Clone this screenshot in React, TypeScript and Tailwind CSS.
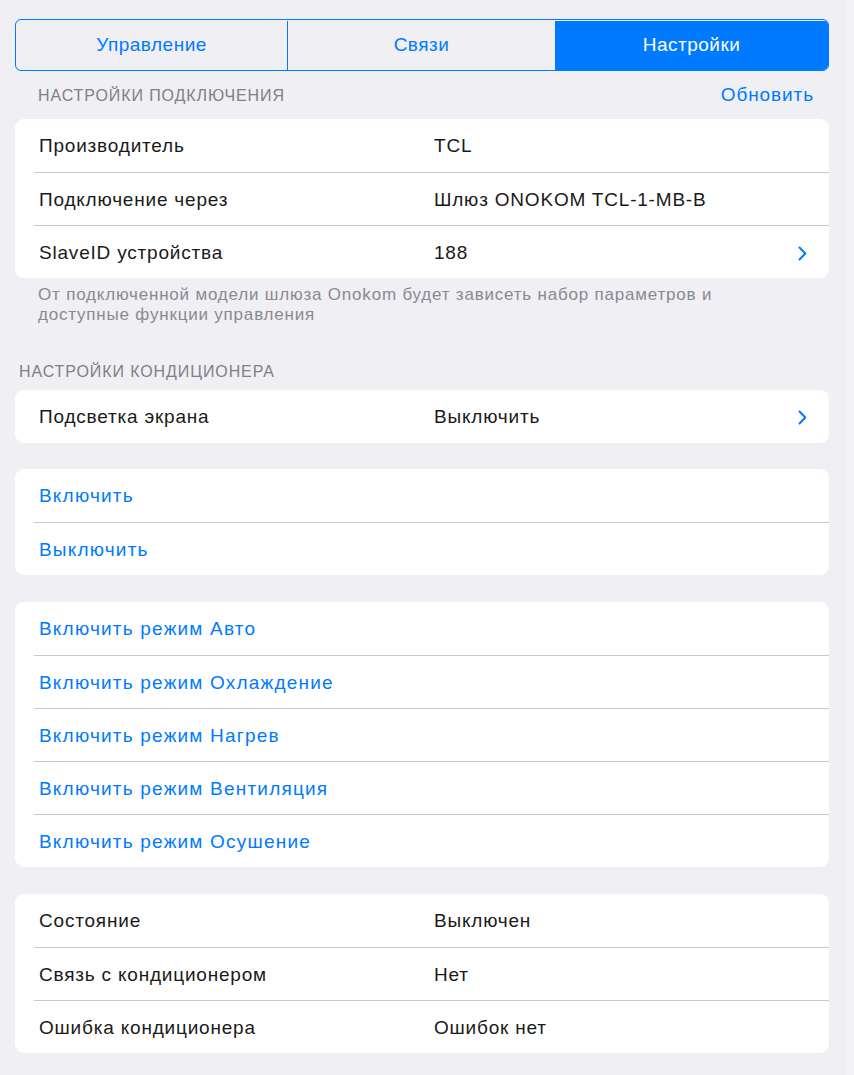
import React from 'react';
import clsx from 'clsx';

type RowProps = {
  label: string;
  value?: string;
  chevron?: boolean;
  first?: boolean;
  action?: boolean;
};

const Chevron = () => (
  <svg width="9" height="15" viewBox="0 0 9 15" fill="none" className="shrink-0">
    <path d="M1.5 1.5 L7.3 7.5 L1.5 13.5" stroke="#007aff" strokeWidth="2" strokeLinecap="round" strokeLinejoin="round" />
  </svg>
);

const Row = ({ label, value, chevron, first, action }: RowProps) => (
  <div
    className={clsx(
      'ml-[19px] h-[53px] flex items-center pl-[5px] pr-[22px] pt-[2px]',
      !first && 'border-t border-[#c8c7cc]'
    )}
  >
    <div className={clsx('w-[395px] shrink-0', action ? 'text-[#007aff] tracking-[1.2px]' : 'text-[#1a1a1a]')}>{label}</div>
    <div className="flex-1 text-[#1a1a1a]">{value}</div>
    {chevron && <Chevron />}
  </div>
);

const Card = ({ children, className }: { children: React.ReactNode; className?: string }) => (
  <div className={clsx('bg-white rounded-[9px] overflow-hidden', className)}>{children}</div>
);

const App = () => {
  const modes = ['Авто', 'Охлаждение', 'Нагрев', 'Вентиляция', 'Осушение'];

  return (
    <div className="min-h-screen bg-[#efeff4] flex font-[family-name:Liberation_Sans,Arial,sans-serif] font-normal text-[19px] tracking-[0.8px]">
      <div className="w-[847px] pl-[15px] pr-[18px] pt-[19px] pb-[22px]">
        {/* segmented control */}
        <div className="flex h-[52px] rounded-[6px] border border-[#007aff] overflow-hidden pt-[1px] tracking-[0.5px]">
          <div className="w-[272px] flex items-center justify-center border-r border-[#007aff] text-[#007aff]">
            Управление
          </div>
          <div className="w-[267px] flex items-center justify-center text-[#007aff]">Связи</div>
          <div className="flex-1 flex items-center justify-center bg-[#007aff] text-white">Настройки</div>
        </div>

        <div className="h-[48px] flex items-center justify-between pl-[23px] pr-[15px] pt-[1px]">
          <span className="text-[16px] tracking-[0.9px] text-[#808085]">НАСТРОЙКИ ПОДКЛЮЧЕНИЯ</span>
          <span className="text-[#007aff] tracking-[0.9px]">Обновить</span>
        </div>

        <Card>
          <Row first label="Производитель" value="TCL" />
          <Row label="Подключение через" value="Шлюз ONOKOM TCL-1-MB-B" />
          <Row label="SlaveID устройства" value="188" chevron />
        </Card>

        <p className="pt-[7px] pl-[23px] text-[17px] leading-[20px] tracking-[0.8px] text-[#8a8a8f]">
          От подключенной модели шлюза Onokom будет зависеть набор параметров и
          <br />
          доступные функции управления
        </p>

        <div className="pt-[37px] pb-[8px] pl-[4px] text-[16px] leading-[20px] tracking-[0.9px] text-[#808085]">
          НАСТРОЙКИ КОНДИЦИОНЕРА
        </div>

        <Card>
          <Row first label="Подсветка экрана" value="Выключить" chevron />
        </Card>

        <Card className="mt-[26px]">
          <Row first action label="Включить" />
          <Row action label="Выключить" />
        </Card>

        <Card className="mt-[27px]">
          {modes.map((m, i) => (
            <Row key={m} first={i === 0} action label={`Включить режим ${m}`} />
          ))}
        </Card>

        <Card className="mt-[27px]">
          <Row first label="Состояние" value="Выключен" />
          <Row label="Связь с кондиционером" value="Нет" />
          <Row label="Ошибка кондиционера" value="Ошибок нет" />
        </Card>
      </div>
      <div className="w-[7px] bg-[#f4f4f7]" />
    </div>
  );
};

export default App;
